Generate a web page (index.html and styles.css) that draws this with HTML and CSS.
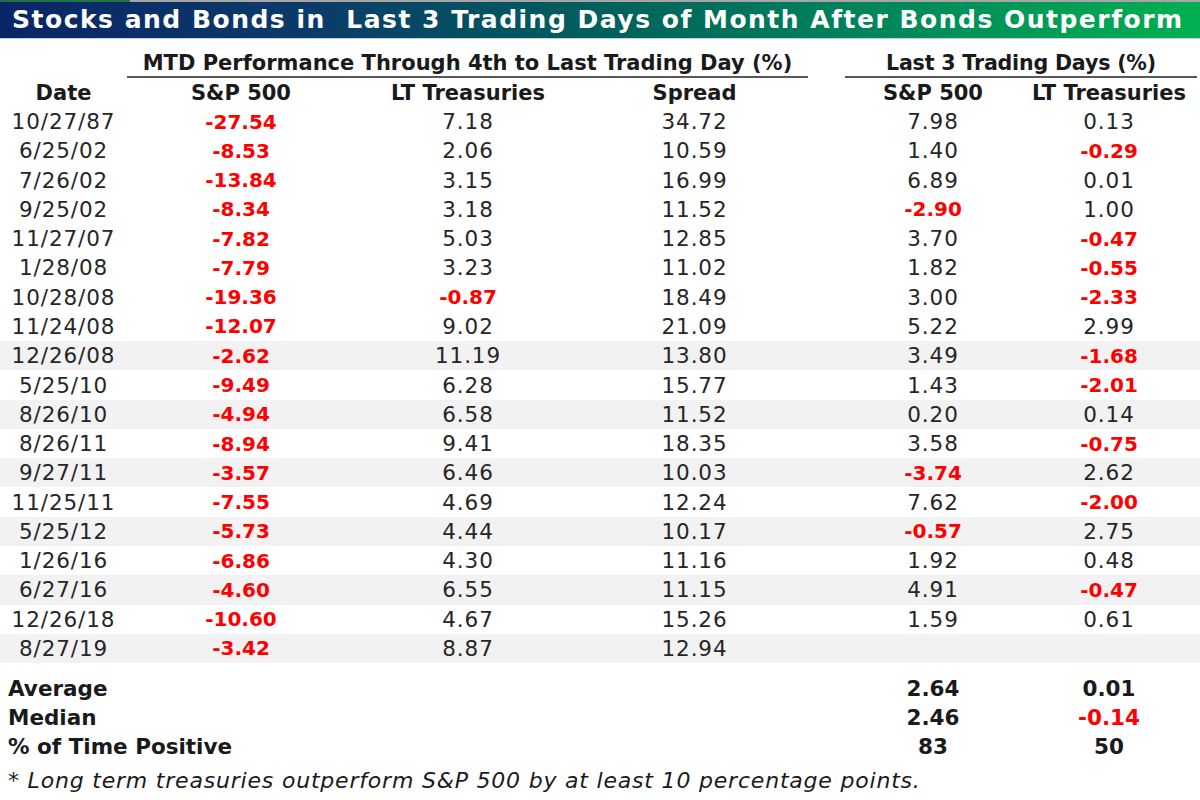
FILE: index.html
```html
<!DOCTYPE html>
<html>
<head>
<meta charset="utf-8">
<link rel="stylesheet" href="styles.css">
</head>
<body>
<div class="page">
  <div class="topstrip"><div class="ts-green"></div><div class="ts-gray"></div></div>
  <div class="title">Stocks and Bonds in  Last 3 Trading Days of Month After Bonds Outperform</div>
  <div class="row group">
    <div></div>
    <div class="grp grp-mtd">MTD Performance Through 4th to Last Trading Day (%)</div>
    <div></div>
    <div class="grp grp-last">Last 3 Trading Days (%)</div>
  </div>
  <div class="row head">
    <div>Date</div><div>S&amp;P 500</div><div>LT Treasuries</div><div>Spread</div><div></div><div>S&amp;P 500</div><div>LT Treasuries</div>
  </div>
  <div class="rows">
    <div class="row data"><div>10/27/87</div><div class="neg">-27.54</div><div>7.18</div><div>34.72</div><div></div><div>7.98</div><div>0.13</div></div>
    <div class="row data"><div>6/25/02</div><div class="neg">-8.53</div><div>2.06</div><div>10.59</div><div></div><div>1.40</div><div class="neg">-0.29</div></div>
    <div class="row data"><div>7/26/02</div><div class="neg">-13.84</div><div>3.15</div><div>16.99</div><div></div><div>6.89</div><div>0.01</div></div>
    <div class="row data"><div>9/25/02</div><div class="neg">-8.34</div><div>3.18</div><div>11.52</div><div></div><div class="neg">-2.90</div><div>1.00</div></div>
    <div class="row data"><div>11/27/07</div><div class="neg">-7.82</div><div>5.03</div><div>12.85</div><div></div><div>3.70</div><div class="neg">-0.47</div></div>
    <div class="row data"><div>1/28/08</div><div class="neg">-7.79</div><div>3.23</div><div>11.02</div><div></div><div>1.82</div><div class="neg">-0.55</div></div>
    <div class="row data"><div>10/28/08</div><div class="neg">-19.36</div><div class="neg">-0.87</div><div>18.49</div><div></div><div>3.00</div><div class="neg">-2.33</div></div>
    <div class="row data"><div>11/24/08</div><div class="neg">-12.07</div><div>9.02</div><div>21.09</div><div></div><div>5.22</div><div>2.99</div></div>
    <div class="row data shade"><div>12/26/08</div><div class="neg">-2.62</div><div>11.19</div><div>13.80</div><div></div><div>3.49</div><div class="neg">-1.68</div></div>
    <div class="row data"><div>5/25/10</div><div class="neg">-9.49</div><div>6.28</div><div>15.77</div><div></div><div>1.43</div><div class="neg">-2.01</div></div>
    <div class="row data shade"><div>8/26/10</div><div class="neg">-4.94</div><div>6.58</div><div>11.52</div><div></div><div>0.20</div><div>0.14</div></div>
    <div class="row data"><div>8/26/11</div><div class="neg">-8.94</div><div>9.41</div><div>18.35</div><div></div><div>3.58</div><div class="neg">-0.75</div></div>
    <div class="row data shade"><div>9/27/11</div><div class="neg">-3.57</div><div>6.46</div><div>10.03</div><div></div><div class="neg">-3.74</div><div>2.62</div></div>
    <div class="row data"><div>11/25/11</div><div class="neg">-7.55</div><div>4.69</div><div>12.24</div><div></div><div>7.62</div><div class="neg">-2.00</div></div>
    <div class="row data shade"><div>5/25/12</div><div class="neg">-5.73</div><div>4.44</div><div>10.17</div><div></div><div class="neg">-0.57</div><div>2.75</div></div>
    <div class="row data"><div>1/26/16</div><div class="neg">-6.86</div><div>4.30</div><div>11.16</div><div></div><div>1.92</div><div>0.48</div></div>
    <div class="row data shade"><div>6/27/16</div><div class="neg">-4.60</div><div>6.55</div><div>11.15</div><div></div><div>4.91</div><div class="neg">-0.47</div></div>
    <div class="row data"><div>12/26/18</div><div class="neg">-10.60</div><div>4.67</div><div>15.26</div><div></div><div>1.59</div><div>0.61</div></div>
    <div class="row data shade"><div>8/27/19</div><div class="neg">-3.42</div><div>8.87</div><div>12.94</div><div></div><div></div><div></div></div>
  </div>
  <div class="summary">
    <div class="row sum"><div class="label">Average</div><div></div><div></div><div></div><div></div><div>2.64</div><div>0.01</div></div>
    <div class="row sum"><div class="label">Median</div><div></div><div></div><div></div><div></div><div>2.46</div><div class="neg">-0.14</div></div>
    <div class="row sum"><div class="label">% of Time Positive</div><div></div><div></div><div></div><div></div><div>83</div><div>50</div></div>
  </div>
  <div class="note">* Long term treasuries outperform S&amp;P 500 by at least 10 percentage points.</div>
</div>
</body>
</html>
```
FILE: styles.css
```css
* { box-sizing: border-box; }
html, body { margin: 0; padding: 0; background: #ffffff; }
body { font-family: "DejaVu Sans", Verdana, sans-serif; color: #262626; }
.page { width: 1200px; height: 800px; overflow: hidden; }
.topstrip { display: flex; height: 2px; }
.ts-green { width: 130px; background: #217346; }
.ts-gray { flex: 1; background: #a6a6a6; }
.title {
  height: 36px;
  background: linear-gradient(to right, #0a2566 0%, #0b3a6a 25%, #00605c 50%, #00895a 75%, #00b050 100%);
  color: #ffffff;
  font-weight: bold;
  font-size: 25px;
  letter-spacing: 1.5px;
  line-height: 36px;
  padding-left: 12px;
  white-space: pre;
}
.row {
  display: grid;
  grid-template-columns: 127px 228px 226px 227px 37px 176px 176px 3px;
  align-items: center;
  text-align: center;
}
.group {
  height: 40px;
  border-top: 1px solid #c5cfdc;
  grid-template-columns: 127px 681px 37px 352px 3px;
  align-items: end;
}
.grp {
  font-weight: bold;
  font-size: 21px;
  color: #1a1a1a;
  border-bottom: 2px solid #595959;
  padding-bottom: 0;
  line-height: 25px;
}
.grp-last { letter-spacing: -0.2px; font-size: 20.6px; }
.head { height: 29px; font-weight: bold; font-size: 21px; color: #1a1a1a; }
.data { height: 29.28px; font-size: 21.5px; letter-spacing: 0.9px; }
.shade { background: #f2f2f2; }
.neg { color: #ff0000; }
.data .neg { font-weight: bold; font-size: 20px; letter-spacing: 0; }
.summary { margin-top: 11px; }
.sum { height: 29px; font-weight: bold; font-size: 21.5px; color: #1a1a1a; }
.sum .label { text-align: left; padding-left: 8px; white-space: nowrap; }
.note {
  margin-top: 6px;
  padding-left: 8px;
  font-style: italic;
  font-size: 22px;
  letter-spacing: 0.8px;
  line-height: 28px;
  color: #1a1a1a;
  white-space: nowrap;
}
```
